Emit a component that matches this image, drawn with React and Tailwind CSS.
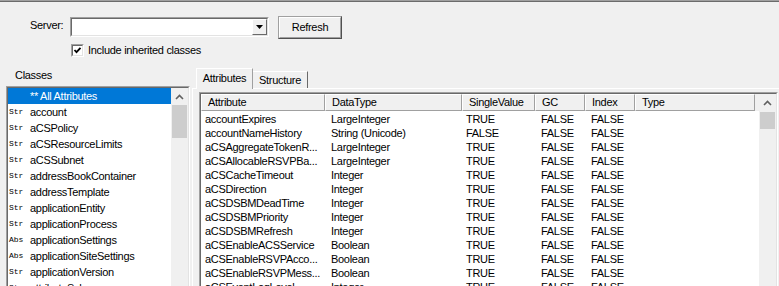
import React from "react";

const classes = [
  { t: "Str", n: "account" },
  { t: "Str", n: "aCSPolicy" },
  { t: "Str", n: "aCSResourceLimits" },
  { t: "Str", n: "aCSSubnet" },
  { t: "Str", n: "addressBookContainer" },
  { t: "Str", n: "addressTemplate" },
  { t: "Str", n: "applicationEntity" },
  { t: "Str", n: "applicationProcess" },
  { t: "Abs", n: "applicationSettings" },
  { t: "Abs", n: "applicationSiteSettings" },
  { t: "Str", n: "applicationVersion" },
  { t: "Str", n: "attributeSchema" },
];

const rows = [
  ["accountExpires", "LargeInteger", "TRUE"],
  ["accountNameHistory", "String (Unicode)", "FALSE"],
  ["aCSAggregateTokenR...", "LargeInteger", "TRUE"],
  ["aCSAllocableRSVPBa...", "LargeInteger", "TRUE"],
  ["aCSCacheTimeout", "Integer", "TRUE"],
  ["aCSDirection", "Integer", "TRUE"],
  ["aCSDSBMDeadTime", "Integer", "TRUE"],
  ["aCSDSBMPriority", "Integer", "TRUE"],
  ["aCSDSBMRefresh", "Integer", "TRUE"],
  ["aCSEnableACSService", "Boolean", "TRUE"],
  ["aCSEnableRSVPAcco...", "Boolean", "TRUE"],
  ["aCSEnableRSVPMess...", "Boolean", "TRUE"],
  ["aCSEventLogLevel", "Integer", "TRUE"],
];

const headers = ["Attribute", "DataType", "SingleValue", "GC", "Index", "Type"];

// sunken 3d frame, classic windows
const Sunken = ({ className = "", children }) => (
  <div className={`border border-[#a0a0a0] border-r-white border-b-white ${className}`}>
    <div className="h-full border border-[#696969] border-r-[#e3e3e3] border-b-[#e3e3e3] bg-white">
      {children}
    </div>
  </div>
);

const ArrowUp = () => (
  <svg width="9" height="6" viewBox="0 0 9 6">
    <path d="M1 5 L4.5 1.5 L8 5" fill="none" stroke="#606060" strokeWidth="1.6" />
  </svg>
);

const ScrollBar = ({ thumbTop, thumbH }) => (
  <div className="w-[17px] h-full bg-[#f0f0f0] flex flex-col">
    <div className="h-[17px] flex items-center justify-center">
      <ArrowUp />
    </div>
    <div className={`mx-[1px] bg-[#cdcdcd] ${thumbTop} ${thumbH}`} />
  </div>
);

export default function App() {
  return (
    <div className="w-[779px] h-[286px] overflow-hidden bg-[#f0f0f0] text-black text-[11px] leading-none tracking-[-0.3px] font-['Liberation_Sans',Arial,sans-serif]">
      <div className="h-px bg-[#a0a0a0]" />
      <div className="h-px bg-[#6b6b6b]" />

      {/* server row */}
      <div className="flex items-start pl-[30px] pt-[14px]">
        <span className="mt-[4px] w-[40px]">Server:</span>
        <Sunken className="w-[199px] h-[20px] mt-px">
          <div className="flex justify-end h-full">
            <div className="w-[15px] h-full border border-white border-r-[#696969] border-b-[#696969] bg-[#f0f0f0] flex items-center justify-center">
              <svg width="7" height="4" viewBox="0 0 7 4">
                <path d="M0 0 H7 L3.5 4 Z" fill="#000" />
              </svg>
            </div>
          </div>
        </Sunken>
        <div className="ml-[9px] w-[64px] h-[23px] border border-[#a0a0a0] border-r-[#505050] border-b-[#505050]">
          <div className="h-full border border-white border-r-[#a0a0a0] border-b-[#a0a0a0] bg-[#f0f0f0] flex items-center justify-center">
            Refresh
          </div>
        </div>
      </div>

      {/* checkbox */}
      <div className="flex items-center pl-[71px] mt-[5px]">
        <Sunken className="w-[13px] h-[13px]">
          <svg width="9" height="9" viewBox="0 0 9 9" className="block">
            <path d="M1.5 4 L3.5 6.2 L7.5 1.8" fill="none" stroke="#000" strokeWidth="1.8" />
          </svg>
        </Sunken>
        <span className="ml-[4px]">Include inherited classes</span>
      </div>

      <div className="flex mt-[3px]">
        {/* classes column */}
        <div className="w-[192px] flex flex-col">
          <div className="pl-[15px] mt-[10px] h-[11px]">Classes</div>
          <Sunken className="ml-[6px] w-[184px] h-[230px] mt-[5px]">
            <div className="flex h-full">
              <div className="flex-1 flex flex-col">
                <div className="h-[16px] bg-[#0078d7] text-white flex items-center pl-[22px]">
                  ** All Attributes
                </div>
                {classes.map((c, i) => (
                  <div key={i} className="h-[16px] flex items-center">
                    <span className="w-[22px] pl-[1px] text-[8px] tracking-normal font-['Liberation_Mono',monospace]">
                      {c.t}
                    </span>
                    <span>{c.n}</span>
                  </div>
                ))}
              </div>
              <ScrollBar thumbTop="mt-0" thumbH="h-[33px]" />
            </div>
          </Sunken>
        </div>

        {/* tabs */}
        <div className="flex-1 flex flex-col">
          <div className="flex items-end pl-[4px] h-[21px] mt-[7px]">
            <div className="h-[21px] w-[57px] border border-white border-b-0 border-r-[#a0a0a0] flex items-center justify-center pb-px bg-[#f0f0f0] relative z-10 mb-[-1px]">
              Attributes
            </div>
            <div className="h-[17px] w-[55px] border border-white border-b-0 border-l-0 border-r-[#696969] flex items-center justify-center">
              Structure
            </div>
          </div>
          <div className="flex-1 border-t border-l border-white pl-[6px] pt-[3px]">
            <Sunken className="w-[579px] h-[230px]">
              <div className="flex h-full">
                <div className="flex-1 flex flex-col">
                  <div className="grid grid-cols-[124px_137px_73px_50px_50px_120px] h-[17px] bg-[#f0f0f0]">
                    {headers.map((h, i) => (
                      <div
                        key={i}
                        className="border border-white border-r-[#a0a0a0] border-b-[#a0a0a0] flex items-center pl-[6px]"
                      >
                        {h}
                      </div>
                    ))}
                  </div>
                  <div className="pt-[1px]">
                    {rows.map((r, i) => (
                      <div key={i} className="grid grid-cols-[124px_137px_73px_50px_50px_120px] h-[14px] items-center">
                        <span className="pl-[4px] whitespace-nowrap">{r[0]}</span>
                        <span className="pl-[6px]">{r[1]}</span>
                        <span className="pl-[4px]">{r[2]}</span>
                        <span className="pl-[6px]">FALSE</span>
                        <span className="pl-[6px]">FALSE</span>
                        <span />
                      </div>
                    ))}
                  </div>
                </div>
                <ScrollBar thumbTop="mt-px" thumbH="h-[17px]" />
              </div>
            </Sunken>
          </div>
        </div>
      </div>
    </div>
  );
}
